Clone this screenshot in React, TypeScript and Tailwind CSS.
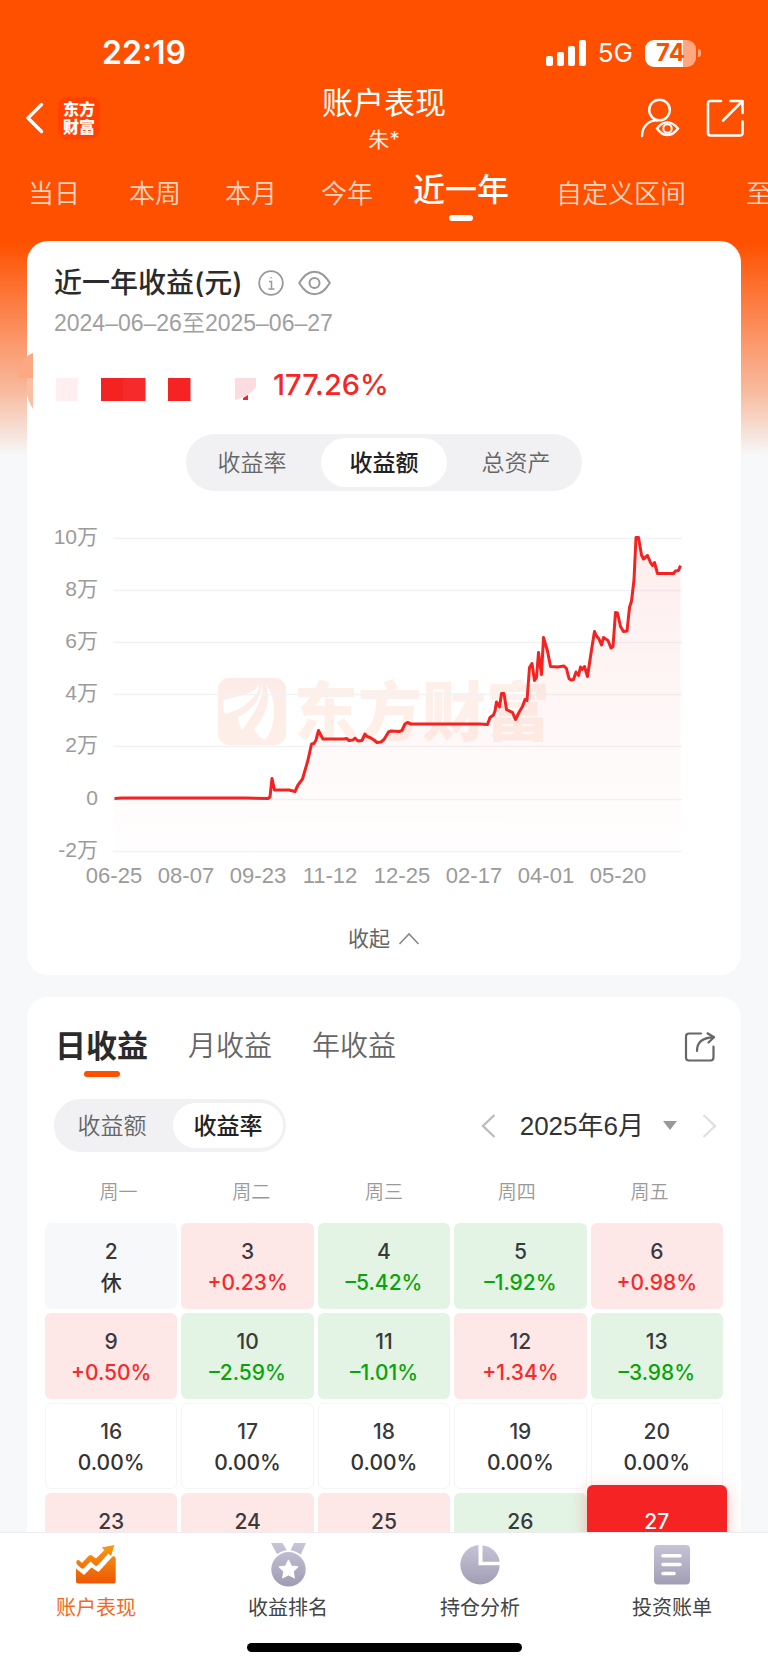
import { useState } from "react";
import type { ReactNode } from "react";

const ranges = ["当日", "本周", "本月", "今年", "近一年", "自定义区间", "至今"];
const weekdays = ["周一", "周二", "周三", "周四", "周五"];

type Tone = "rest" | "up" | "down" | "flat" | "today";
type Day = { day: number; value?: string; tone: Tone };

const days: Day[] = [
  { day: 2, value: "休", tone: "rest" },
  { day: 3, value: "+0.23%", tone: "up" },
  { day: 4, value: "–5.42%", tone: "down" },
  { day: 5, value: "–1.92%", tone: "down" },
  { day: 6, value: "+0.98%", tone: "up" },
  { day: 9, value: "+0.50%", tone: "up" },
  { day: 10, value: "–2.59%", tone: "down" },
  { day: 11, value: "–1.01%", tone: "down" },
  { day: 12, value: "+1.34%", tone: "up" },
  { day: 13, value: "–3.98%", tone: "down" },
  { day: 16, value: "0.00%", tone: "flat" },
  { day: 17, value: "0.00%", tone: "flat" },
  { day: 18, value: "0.00%", tone: "flat" },
  { day: 19, value: "0.00%", tone: "flat" },
  { day: 20, value: "0.00%", tone: "flat" },
  { day: 23, tone: "up" },
  { day: 24, tone: "up" },
  { day: 25, tone: "up" },
  { day: 26, tone: "down" },
  { day: 27, tone: "today" },
];

const cellStyle: Record<Tone, string> = {
  rest: "h-[86px] pt-[14px] bg-[#f7f8fa]",
  up: "h-[86px] pt-[14px] bg-[#fde7e7]",
  down: "h-[86px] pt-[14px] bg-[#e3f4e4]",
  flat: "h-[86px] pt-[13px] bg-white border border-[#f5f5f7]",
  today:
    "relative z-10 h-[102px] -mx-1 -my-2 pt-[22px] bg-[#f52323] shadow-[0_4px_16px_rgba(245,35,35,0.3)]",
};

const valueStyle: Record<Tone, string> = {
  rest: "text-[#333]",
  up: "text-[#f62a2a]",
  down: "text-[#0ba30b]",
  flat: "text-[#333]",
  today: "text-white",
};

const yTicks = [
  { label: "10万", y: 538 },
  { label: "8万", y: 590 },
  { label: "6万", y: 642 },
  { label: "4万", y: 694 },
  { label: "2万", y: 746 },
  { label: "0", y: 799 },
  { label: "-2万", y: 851 },
];
const xTicks = ["06-25", "08-07", "09-23", "11-12", "12-25", "02-17", "04-01", "05-20"];

const curve =
  "114.5,798.5 122,798 245,798 268,798.5 270,797 272,778.5 274.5,790 289,790 295,791.5 298,785 302.5,779 308,760 311.5,744 314,743.5 316,740 318.5,730.5 321,735.5 323,739 344,739 346.5,738.5 349,740.5 353,740 355,738 358,741 362,740.5 365,734 367,736.5 370,737.5 374,740 377,742.5 381,742 384,739.5 388.5,732 391,731 399,731.5 402,730.5 405,724 407.5,722.5 411,724 480,724 487.5,724.5 490,717.5 493.5,715 495,711 496.5,702 499.5,707 501.5,693.5 504,693.5 506.5,709.5 512.5,712.5 515.5,719.5 519.5,711.5 522.5,706.5 525,699.5 527,700.5 529.5,667.5 532,663.5 534.5,680.5 536.5,677.5 538.5,652.5 541.5,674.5 543.5,637.5 547.5,651 550.5,666.5 557.5,667 564,666 566.5,668.5 569,678.5 571,680 573.5,679.5 576,672 578.5,675.5 580.5,667 582,669.5 584.5,666.5 587.5,676.5 591.5,650 594.5,631.5 596.5,636 599,639 601.5,645 603.5,637.5 608,640.5 611,648 613,646.5 615.5,612.5 617.5,613 620.5,626.5 623.5,631.5 627,631 629.5,607.5 631.5,601 634,580 636,537.5 638.5,537.5 641.5,555 643.5,559 647.5,555.5 650.5,562.5 652.5,565.5 654.5,562.5 657.5,573.5 673.5,573.5 675.5,571 678.5,570.5 680.5,565.5";

function ProfitChart() {
  return (
    <svg viewBox="27 510 714 380" className="block w-full" role="img" aria-label="收益额">
      <defs>
        <linearGradient id="area" gradientUnits="userSpaceOnUse" x1="0" y1="538" x2="0" y2="851">
          <stop offset="0" stopColor="#f52222" stopOpacity="0.08" />
          <stop offset="1" stopColor="#f52222" stopOpacity="0.004" />
        </linearGradient>
        <linearGradient id="mark" x1="0" y1="0" x2="0" y2="1">
          <stop offset="0" stopColor="#fdebe9" />
          <stop offset="1" stopColor="#fdefe7" />
        </linearGradient>
      </defs>
      <rect x="218" y="678" width="68" height="67" rx="11" fill="url(#mark)" />
      <path
        d="M224 700 C236 696 252 696 259 685 C261 691 247 709 225 714 C223 710 223 704 224 700 Z M262 684 C265 699 252 716 242 730 C239 726 238 721 238 717 C250 711 261 700 262 684 Z M266 684 C276 698 278 724 265 740 C260 738 256 733 254 729 C266 716 271 702 266 684 Z"
        fill="#fff"
      />
      <text x="294" y="735" fontSize="64" fontWeight="900" fill="#fef0e9" className="font-['Noto_Sans_CJK_SC',sans-serif]">
        东方财富
      </text>
      {yTicks.map((t) => (
        <path key={t.label} d={`M113 ${t.y + 0.5}H682`} stroke="#f2f2f5" strokeWidth="1.5" />
      ))}
      <polygon points={`114.5,851 ${curve} 680.5,851`} fill="url(#area)" />
      <polyline points={curve} fill="none" stroke="#f52222" strokeWidth="3" strokeLinejoin="round" />
      <g fill="#9b9b9b" className="font-['Liberation_Sans','Noto_Sans_CJK_SC',sans-serif]">
        {yTicks.map((t) => (
          <text key={t.label} x="98" y={t.y + 6} fontSize="21" textAnchor="end">
            {t.label}
          </text>
        ))}
        {xTicks.map((t, i) => (
          <text key={t} x={114 + i * 72} y="883" fontSize="22" textAnchor="middle">
            {t}
          </text>
        ))}
      </g>
    </svg>
  );
}

function StatusBar() {
  return (
    <div className="flex h-[72px] items-center justify-between pt-[34px] pr-[67px] pl-[102px] text-white">
      <time className="text-[32px] leading-[38px] font-semibold">22:19</time>
      <div className="flex items-center">
        <svg width="40" height="26" viewBox="0 0 40 26" fill="#fff" aria-hidden="true">
          <rect x="0" y="16" width="7" height="10" rx="2" />
          <rect x="11" y="12" width="7" height="14" rx="2" />
          <rect x="22" y="6" width="7" height="20" rx="2" />
          <rect x="33" y="0" width="7" height="26" rx="2" />
        </svg>
        <span className="ml-3 text-[26px] leading-[38px]">5G</span>
        <div className="ml-3 flex items-center gap-[2px]">
          <div className="flex h-[27px] w-[51px] items-center justify-center rounded-[9px] bg-[linear-gradient(to_right,#fff_74%,#ffa77f_74%)] text-2xl leading-none font-bold text-[#ff5000]">
            74
          </div>
          <span className="h-2 w-[3px] rounded-r-full bg-[#ffa77f]" />
        </div>
      </div>
    </div>
  );
}

function TitleBar() {
  return (
    <div className="grid h-[92px] grid-cols-3 items-center px-6 text-white">
      <div className="flex items-center gap-[14px]">
        <button aria-label="返回">
          <svg width="20" height="32" viewBox="0 0 20 32" fill="none" stroke="#fff" strokeWidth="3.4" strokeLinecap="round" strokeLinejoin="round">
            <path d="M17.500 2.500 4 16 17.500 29.500" />
          </svg>
        </button>
        <a
          href="#home"
          className="flex size-[42px] flex-col items-center justify-center rounded-[9px] bg-[#ff4200] text-base leading-[18px] font-black"
        >
          <span>东方</span>
          <span>财富</span>
        </a>
      </div>
      <div className="flex flex-col items-center pt-[5px]">
        <h1 className="text-[31px] leading-[37px]">账户表现</h1>
        <span className="text-[21px] leading-[37px] text-white/90">朱*</span>
      </div>
      <div className="flex items-center justify-end gap-[26px]">
        <button aria-label="账户可见性">
          <svg width="40" height="40" viewBox="0 0 40 40" fill="none" stroke="#fff" strokeWidth="2.4" strokeLinecap="round">
            <circle cx="19.5" cy="12" r="10.3" />
            <path d="M2 38 C2 29 8 22.6 17 22.4" />
            <path d="M17 30.5 C20.5 25.6 23.5 24.4 27.3 24.4 C31.5 24.4 34.5 26 38 30.5 C34.5 35.4 31.5 37 27.3 37 C23.5 37 20.5 35.6 17 30.5 Z" />
            <circle cx="27.5" cy="30.5" r="4.2" strokeWidth="2" />
          </svg>
        </button>
        <button aria-label="分享">
          <svg width="38" height="38" viewBox="0 0 38 38" fill="none" stroke="#fff" strokeWidth="2.6" strokeLinecap="round" strokeLinejoin="round">
            <path d="M15 2H4.500Q2 2 2 4.500V34Q2 36.500 4.500 36.500H34Q36.500 36.500 36.500 34V22.500" />
            <path d="M24.500 2H36.500V14" />
            <path d="M36 2.500 17 21.500" />
          </svg>
        </button>
      </div>
    </div>
  );
}

function Segmented({
  items,
  active,
  onSelect,
  className,
}: {
  items: string[];
  active: string;
  onSelect: (item: string) => void;
  className: string;
}) {
  return (
    <div className={`grid auto-cols-fr grid-flow-col rounded-full bg-[#f1f1f4] py-1 text-[23px] leading-8 ${className}`}>
      {items.map((item) => (
        <button
          key={item}
          aria-pressed={item === active}
          onClick={() => onSelect(item)}
          className={
            item === active
              ? "mx-[3px] rounded-full bg-white font-medium text-[#222]"
              : "rounded-full font-[350] text-[#666]"
          }
        >
          {item}
        </button>
      ))}
    </div>
  );
}

function NavItem({ label, active, children }: { label: string; active?: boolean; children: ReactNode }) {
  return (
    <a href={`#${label}`} className="flex flex-col items-center gap-[6px]">
      <svg width="44" height="44" viewBox="0 0 44 44" aria-hidden="true">
        {children}
      </svg>
      <span className={active ? "text-[20px] leading-[30px] text-[#f36a1c]" : "text-[20px] leading-[30px] text-[#444]"}>
        {label}
      </span>
    </a>
  );
}

export default function App() {
  const [range, setRange] = useState("近一年");
  const [metric, setMetric] = useState("收益额");
  const [period, setPeriod] = useState("日收益");
  const [mode, setMode] = useState("收益率");

  return (
    <div className="flex h-screen flex-col overflow-hidden bg-[#f6f8fa] font-['Inter','Noto_Sans_CJK_SC',sans-serif]">
      <div className="min-h-0 flex-1 overflow-y-auto bg-[linear-gradient(to_bottom,#ff5000_0,#ff5000_242px,#fb9a6e_345px,#f8b99c_390px,#f6f8fa_456px)] [scrollbar-width:none]">
        <header>
          <StatusBar />
          <TitleBar />
          <nav className="grid h-[77px] grid-cols-[101px_96px_96px_92px_143px_190px_52px] items-start overflow-hidden pl-7 text-[26px] leading-[60px] font-[350] whitespace-nowrap text-white/75">
            {ranges.map((item) => (
              <button
                key={item}
                aria-pressed={item === range}
                onClick={() => setRange(item)}
                className={
                  item === range
                    ? "flex flex-col items-center justify-self-start text-[32px] leading-[51px] font-medium text-white"
                    : "justify-self-start"
                }
              >
                {item}
                {item === range && <span className="h-[6px] w-6 rounded-full bg-white" />}
              </button>
            ))}
          </nav>
        </header>

        <main className="relative px-[27px]">
          <section className="rounded-[21px] bg-white pt-6">
            <div className="px-[27px]">
              <div className="flex h-9 items-center">
                <h2 className="text-[28px] leading-9 font-medium text-[#2b2b2b]">近一年收益(元)</h2>
                <button aria-label="说明" className="ml-[15px]">
                  <svg width="26" height="26" viewBox="0 0 26 26" fill="none" stroke="#999" strokeWidth="1.8">
                    <circle cx="13" cy="13" r="11.800" />
                    <path d="M11 11.500H13.500V19M10.500 19H16.500" strokeWidth="1.500" />
                    <circle cx="13" cy="7.800" r="0.800" fill="#999" stroke="none" />
                  </svg>
                </button>
                <button aria-label="隐藏金额" className="ml-[14px]">
                  <svg width="33" height="26" viewBox="0 0 33 26" fill="none" stroke="#999" strokeWidth="2">
                    <path d="M1.200 13 C6 5.500 10 1.800 16.500 1.800 C23 1.800 27 5.500 31.800 13 C27 20.500 23 24.200 16.500 24.200 C10 24.200 6 20.500 1.200 13 Z" strokeLinejoin="round" />
                    <circle cx="16.500" cy="13" r="5" />
                  </svg>
                </button>
              </div>
              <p className="mt-[6px] font-['Liberation_Sans','Noto_Sans_CJK_SC',sans-serif] text-[23px] leading-8 font-[350] text-[#a0a0a0]">
                2024–06–26至2025–06–27
              </p>
              <div className="mt-[22px] flex h-12 items-center gap-[17px]">
                <svg width="202" height="32" viewBox="0 0 202 32" aria-hidden="true">
                  <rect x="2" y="9" width="22" height="23" fill="#ffeff0" />
                  <rect x="47" y="9" width="22" height="23" fill="#f52222" />
                  <rect x="69" y="9" width="22.500" height="23" fill="#f62a2b" />
                  <rect x="114" y="9" width="22.500" height="23" fill="#f52324" />
                  <path d="M181 9H203.500V14C201 22 192 28 181 31Z" fill="#fddcdf" />
                  <path d="M189 29 194 26V31H189Z" fill="#f52222" />
                </svg>
                <strong className="text-[29px] leading-9 font-medium text-[#f52626]">177.26%</strong>
              </div>
              <Segmented
                items={["收益率", "收益额", "总资产"]}
                active={metric}
                onSelect={setMetric}
                className="mx-auto mt-[25px] h-[57px] w-[396px]"
              />
            </div>
            <div className="mt-[19px]">
              <ProfitChart />
            </div>
            <button className="mx-auto mt-[13px] flex h-[72px] items-center gap-2 text-[21px] text-[#666]">
              收起
              <svg width="22" height="14" viewBox="0 0 22 14" fill="none" stroke="#888" strokeWidth="1.600">
                <path d="M1.500 12 11 2 20.500 12" />
              </svg>
            </button>
          </section>
          <svg className="absolute top-[112px] left-[18px]" width="15" height="56" viewBox="0 0 15 56" aria-hidden="true">
            <path d="M0 25 C1 12 6 3 15 0V25Z" fill="#fba883" />
            <path d="M9 25H15V56C12 51 10 47 9 41Z" fill="#f8bfa5" />
          </svg>

          <section className="mt-[22px] rounded-[21px] bg-white pt-6 pb-8">
            <div className="flex items-start justify-between pr-[25px] pl-7">
              <div className="flex h-14 items-start gap-10">
                {["日收益", "月收益", "年收益"].map((item) => (
                  <button
                    key={item}
                    aria-pressed={item === period}
                    onClick={() => setPeriod(item)}
                    className={
                      item === period
                        ? "flex flex-col items-center text-[31px] leading-[50px] font-bold text-[#2b2b2b]"
                        : "text-[28px] leading-[51px] font-[350] text-[#666]"
                    }
                  >
                    {item}
                    {item === period && <span className="h-[6px] w-9 rounded-full bg-[#ff5000]" />}
                  </button>
                ))}
              </div>
              <button aria-label="分享收益" className="flex h-[52px] items-center">
                <svg width="32" height="32" viewBox="0 0 32 32" fill="none" stroke="#666" strokeWidth="2.200" strokeLinecap="round" strokeLinejoin="round">
                  <path d="M17 2.500H5Q2 2.500 2 5.500V26.500Q2 29.500 5 29.500H26.500Q29.500 29.500 29.500 26.500V15.500" />
                  <path d="M13 20 C13 11 18 6.500 29.500 6.300" />
                  <path d="M23.500 2.300 30 6.300 24.500 11.500" />
                </svg>
              </button>
            </div>

            <div className="mt-[22px] flex items-center justify-between pr-6 pl-[27px]">
              <Segmented items={["收益额", "收益率"]} active={mode} onSelect={setMode} className="h-[53px] w-[232px]" />
              <div className="flex items-center">
                <button aria-label="上个月">
                  <svg width="15" height="26" viewBox="0 0 15 26" fill="none" stroke="#bcbcbc" strokeWidth="2.400">
                    <path d="M13.500 2 2 13 13.500 24" />
                  </svg>
                </button>
                <button className="ml-6 flex items-center gap-[19px] font-['Liberation_Sans','Noto_Sans_CJK_SC',sans-serif] text-[26px] leading-9 text-[#333]">
                  2025年6月
                  <svg width="14" height="9" viewBox="0 0 14 9" fill="#999" aria-hidden="true">
                    <path d="M0 0H14L7 9Z" />
                  </svg>
                </button>
                <button aria-label="下个月" className="ml-[25px]">
                  <svg width="15" height="26" viewBox="0 0 15 26" fill="none" stroke="#e0e0e0" strokeWidth="2.400">
                    <path d="M1.500 2 13 13 1.500 24" />
                  </svg>
                </button>
              </div>
            </div>

            <div className="mt-[26px] grid grid-cols-5 px-[25px] text-center text-[19px] leading-[30px] font-[350] text-[#999]">
              {weekdays.map((w) => (
                <span key={w}>{w}</span>
              ))}
            </div>
            <div className="mt-[15px] grid grid-cols-5 gap-1 px-[18px]">
              {days.map((d) => (
                <button
                  key={d.day}
                  className={`flex flex-col items-center rounded-md text-[21px] font-medium ${cellStyle[d.tone]}`}
                >
                  <span className={d.tone === "today" ? "leading-[30px] text-white" : "leading-[30px] text-[#3a3a3a]"}>
                    {d.day}
                  </span>
                  {d.value && <span className={`leading-8 ${valueStyle[d.tone]}`}>{d.value}</span>}
                </button>
              ))}
            </div>
          </section>
        </main>
      </div>

      <footer className="relative z-20 border-t border-[#ececf0] bg-white pt-[10px] pb-[14px]">
        <svg width="0" height="0" className="absolute" aria-hidden="true">
          <defs>
            <linearGradient id="cool" gradientUnits="userSpaceOnUse" x1="0" y1="0" x2="0" y2="44">
              <stop offset="0" stopColor="#c8c5d8" />
              <stop offset="1" stopColor="#9f9cb2" />
            </linearGradient>
            <linearGradient id="warm" gradientUnits="userSpaceOnUse" x1="0" y1="0" x2="0" y2="44">
              <stop offset="0" stopColor="#fb9d10" />
              <stop offset="1" stopColor="#ea5205" />
            </linearGradient>
          </defs>
        </svg>
        <nav className="grid grid-cols-4">
          <NavItem label="账户表现" active>
            <path
              d="M2.500 18 Q4 16 6.500 18.500 L8 20 15 12.500 Q16.500 11.300 18 12.500 L22 15.500 30.500 7 27.500 4.500 40.500 2 37 13 34.500 10.500 24 22 Q22.500 23.500 21 22.500 L16.500 18.500 10 25 Q8.500 26.300 7 25 L3 21.500 Q2 20 2.500 18 Z"
              fill="url(#warm)"
            />
            <path
              d="M2 25.500 10 32 17.500 24.500 24.500 29 38.500 13.500 Q41.500 12.500 41.700 15.500 V38 Q41.700 40.500 39.200 40.500 H4.500 Q2 40.500 2 38 Z"
              fill="url(#warm)"
            />
          </NavItem>
          <NavItem label="收益排名">
            <path d="M5 0H16.500L21 7.500 11.500 12ZM28 0H40L34.500 12 24.500 7.500Z" fill="url(#cool)" />
            <circle cx="22.500" cy="26.300" r="19" fill="#fff" />
            <circle cx="22.500" cy="26.300" r="17.200" fill="url(#cool)" />
            <path
              d="M22.500 17.200 25.300 23 31.700 23.800 27.100 28.400 28.300 34.800 22.500 31.700 16.700 34.800 17.900 28.400 13.300 23.800 19.700 23Z"
              fill="#fff"
              stroke="#fff"
              strokeWidth="1.200"
              strokeLinejoin="round"
            />
          </NavItem>
          <NavItem label="持仓分析">
            <path d="M20.500 2.100 A19.700 19.700 0 1 0 41.700 22.300 H20.500 Z" fill="url(#cool)" />
            <path d="M24.500 2.200 A19.700 19.700 0 0 1 41.700 18.800 H24.500 Z" fill="url(#cool)" />
          </NavItem>
          <NavItem label="投资账单">
            <rect x="4" y="2" width="36" height="39.500" rx="4" fill="url(#cool)" />
            <path d="M13 12.700H30M13 21.500H30M13 30.500H24" stroke="#fff" strokeWidth="3.600" strokeLinecap="round" />
          </NavItem>
        </nav>
        <div className="mx-auto mt-5 h-[9px] w-[275px] rounded-full bg-black" />
      </footer>
    </div>
  );
}
